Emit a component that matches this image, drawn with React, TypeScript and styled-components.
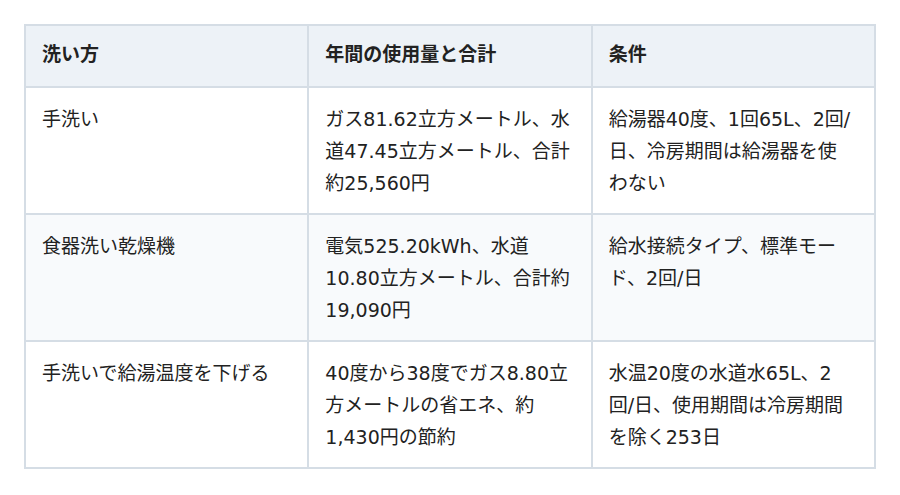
import styled, { createGlobalStyle } from "styled-components";

const GlobalStyle = createGlobalStyle`
  body {
    margin: 0;
    background: #ffffff;
    font-family: "DejaVu Sans", "Noto Sans CJK JP", sans-serif;
    color: #222;
  }
`;

const Wrapper = styled.div`
  padding: 24px;
`;

const Table = styled.table`
  width: 100%;
  border-collapse: collapse;
  table-layout: fixed;
  border: 2px solid #d5dde5;
  font-size: 19px;
  line-height: 32px;
`;

const HeadCell = styled.th`
  text-align: left;
  font-weight: 700;
  padding: 12px 16px 16px;
  background: #edf2f7;
  border: 2px solid #d5dde5;
  vertical-align: top;
`;

const Row = styled.tr<{ $striped?: boolean }>`
  background: ${(p) => (p.$striped ? "#f8fafc" : "#ffffff")};
`;

const Cell = styled.td`
  padding: 15px 16px 14px;
  border: 2px solid #d5dde5;
  vertical-align: top;

  &:last-child {
    padding-right: 22px;
  }
`;

const rows = [
  {
    method: "手洗い",
    usage: "ガス81.62立方メートル、水道47.45立方メートル、合計約25,560円",
    cond: "給湯器40度、1回65L、2回/日、冷房期間は給湯器を使わない",
  },
  {
    method: "食器洗い乾燥機",
    usage: "電気525.20kWh、水道10.80立方メートル、合計約19,090円",
    cond: "給水接続タイプ、標準モード、2回/日",
  },
  {
    method: "手洗いで給湯温度を下げる",
    usage: "40度から38度でガス8.80立方メートルの省エネ、約1,430円の節約",
    cond: "水温20度の水道水65L、2回/日、使用期間は冷房期間を除く253日",
  },
];

export default function App() {
  return (
    <>
      <GlobalStyle />
      <Wrapper>
        <Table>
          <thead>
            <tr>
              <HeadCell>洗い方</HeadCell>
              <HeadCell>年間の使用量と合計</HeadCell>
              <HeadCell>条件</HeadCell>
            </tr>
          </thead>
          <tbody>
            {rows.map((r, i) => (
              <Row key={r.method} $striped={i === 1}>
                <Cell>{r.method}</Cell>
                <Cell>{r.usage}</Cell>
                <Cell>{r.cond}</Cell>
              </Row>
            ))}
          </tbody>
        </Table>
      </Wrapper>
    </>
  );
}
